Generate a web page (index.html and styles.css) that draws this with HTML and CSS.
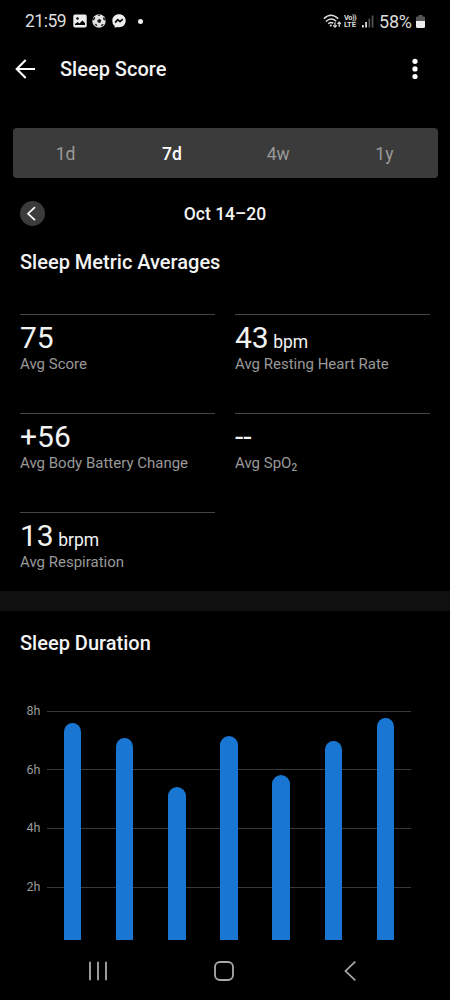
FILE: index.html
```html
<!DOCTYPE html>
<html lang="en">
<head>
<meta charset="utf-8">
<meta name="viewport" content="width=device-width, initial-scale=1">
<title>Sleep Score</title>
<link rel="stylesheet" href="styles.css">
</head>
<body>
<div class="status">
  <div class="status-left">
    <span class="clock">21:59</span>
    <svg width="14" height="14" viewBox="0 0 14 14"><path fill="#eee" fill-rule="evenodd" d="M2 .5h10a1.7 1.7 0 0 1 1.7 1.7v9.6a1.7 1.7 0 0 1-1.7 1.7H2a1.7 1.7 0 0 1-1.7-1.7V2.200A1.700 1.700 0 0 1 2 .5zM2 11h10V9L9.300 6.500 6.500 9.500 4.700 8 2 10zM4.500 3.200a1.300 1.300 0 1 0 0 2.600 1.300 1.300 0 0 0 0-2.600z"/></svg>
    <svg width="14" height="14" viewBox="0 0 14 14"><circle cx="7" cy="7" r="6.700" fill="#e4e4e4"/><path fill="#222" d="M7.300 4.800l2 1.500-.7 2.500H6l-.9-2.300zM5.200.8l3.600-.1L7 2.300zM1 4.600l1.900-1.900.3 2.300L.8 6.800zM13.200 5l-1.900-1.900-.3 2.200 2.400 1.700zM2.300 9.800l2.300.2.9 2.300-1.800-.7zM11.900 10l-2.300.2-.9 2.200 1.800-.6z"/></svg>
    <svg width="14" height="14" viewBox="0 0 14 14"><path fill="#eee" d="M7 .3c3.800 0 6.700 2.700 6.700 6.400S10.800 13.200 7 13.200c-.7 0-1.300-.1-2-.3l-2.200.9-.2-1.900A6.200 6.200 0 0 1 .3 6.700C.3 3 3.200.3 7 .3z"/><path d="M3.200 8.600l2.500-3 2.400 2 2.700-2.400" fill="none" stroke="#111" stroke-width="1.700" stroke-linejoin="round"/></svg>
    <i class="dot"></i>
  </div>
  <div class="status-right">
    <svg width="19" height="15" viewBox="0 0 19 15" fill="none" stroke="#ddd" stroke-width="1.500"><path d="M.8 4.800Q8 -2.200 15.200 4.800M3 7.500q5-4.800 10.200-.2M5.300 9.800q2.500-2.300 5-.4"/><circle cx="7.800" cy="11.500" r="1.100" fill="#ddd" stroke="none"/><path stroke-width="1.200" d="M12 8.200v4.800M10.200 11.400l1.800 1.800 1.800-1.800M16.200 13V8.300M14.500 10l1.700-1.800L17.900 10"/></svg>
    <span class="volte"><span class="vo">Vo))</span><span>LTE</span></span>
    <svg class="signal" width="12" height="13" viewBox="0 0 12 13"><path fill="#ddd" d="M0 10h1.800v2.500H0zM3.200 7H5v5.500H3.200z"/><path fill="#555" d="M6.500 3.500h1.700v9H6.500zM9.700.5h1.700v12H9.700z"/></svg>
    <span class="pct">58%</span>
    <svg class="battery" width="9" height="13" viewBox="0 0 9 13"><path fill="#555" d="M2.500 0h4v1.500H8q1 0 1 1V7H0V2.500q0-1 1-1h1.500z"/><path fill="#eee" d="M0 6h9v5.500Q9 13 7.500 13h-6Q0 13 0 11.500z"/></svg>
  </div>
</div>
<header class="appbar">
  <svg width="20" height="20" viewBox="0 0 20 20" fill="none" stroke="#fff" stroke-width="2.100"><path d="M20 10H2M10.700 1L1.700 10l9 9"/></svg>
  <h1>Sleep Score</h1>
  <svg width="6" height="22" viewBox="0 0 6 22" fill="#fff"><circle cx="3" cy="3.300" r="2.600"/><circle cx="3" cy="10.900" r="2.600"/><circle cx="3" cy="18.500" r="2.600"/></svg>
</header>
<nav class="tabs"><span>1d</span><span class="active">7d</span><span>4w</span><span>1y</span></nav>
<div class="range">
  <span class="prev"><svg width="25" height="25" viewBox="0 0 25 25" fill="none" stroke="#fff" stroke-width="1.700"><path d="M15 6.200L8 12.700l7 6.500"/></svg></span>
  <span class="dates">Oct 14–20</span>
</div>
<h2 class="avg-title">Sleep Metric Averages</h2>
<section class="metrics">
  <div class="metric"><p class="value">75</p><p class="label">Avg Score</p></div>
  <div class="metric"><p class="value">43 <small>bpm</small></p><p class="label">Avg Resting Heart Rate</p></div>
  <div class="metric"><p class="value">+56</p><p class="label">Avg Body Battery Change</p></div>
  <div class="metric"><p class="value">--</p><p class="label">Avg SpO<span class="sub">2</span></p></div>
  <div class="metric"><p class="value">13 <small>brpm</small></p><p class="label">Avg Respiration</p></div>
</section>
<div class="band"></div>
<h2 class="dur-title">Sleep Duration</h2>
<section class="chart">
  <div class="axis"><span>8h</span><span>6h</span><span>4h</span><span>2h</span></div>
  <div class="plot">
    <div class="lines"><i></i><i></i><i></i><i></i></div>
    <div class="bars">
      <i style="height:216.8px"></i><i style="height:201.800px"></i><i style="height:153.300px"></i><i style="height:204px"></i><i style="height:164.700px"></i><i style="height:198.700px"></i><i style="height:222px"></i>
    </div>
  </div>
</section>
<footer class="navbar">
  <svg width="20" height="20" viewBox="0 0 20 20" stroke="#aaa" stroke-width="1.800"><path d="M2 .8v18.400M10 .8v18.400M18 .8v18.400"/></svg>
  <svg width="20" height="20" viewBox="0 0 20 20" fill="none" stroke="#aaa" stroke-width="1.800"><rect x="1" y="1" width="18" height="18" rx="5"/></svg>
  <svg width="20" height="20" viewBox="0 0 20 20" fill="none" stroke="#aaa" stroke-width="1.700"><path d="M15.300.6L5.500 10l9.800 9.400"/></svg>
</footer>
</body>
</html>
```
FILE: styles.css
```css
* { box-sizing: border-box; margin: 0; padding: 0; }
body {
  width: 450px;
  height: 1000px;
  overflow: hidden;
  display: flex;
  flex-direction: column;
  background: #000;
  color: #f3f3f3;
  font-family: Roboto, "Liberation Sans", sans-serif;
}
svg { display: block; flex: none; }
.status {
  height: 42px;
  padding: 0 25px;
  display: flex;
  justify-content: space-between;
  align-items: center;
  color: #ddd;
}
.status-left, .status-right { display: flex; align-items: center; }
.status-left { gap: 5.700px; }
.clock { width: 42px; font-size: 17.500px; letter-spacing: -0.500px; }
.dot { width: 5px; height: 5px; margin-left: 6px; border-radius: 50%; background: #eee; }
.volte {
  width: 14px;
  margin: 0 4px 0 2px;
  display: flex;
  flex-direction: column;
  font-size: 7.500px;
  line-height: 7px;
  font-weight: 700;
  letter-spacing: -0.100px;
}
.vo { letter-spacing: -0.500px; }
.signal { margin-right: 5px; }
.pct { width: 36px; font-size: 18px; letter-spacing: -0.200px; }
.battery { margin-left: 1px; }
.appbar { height: 54px; padding: 0 32px 0 15px; display: flex; align-items: center; }
h1 { flex: 1; margin-left: 25px; font-size: 20px; font-weight: 500; line-height: 24px; }
.tabs {
  height: 50px;
  margin: 32px 12.500px 0;
  padding-top: 1px;
  display: grid;
  grid-template-columns: repeat(4, 1fr);
  align-items: center;
  text-align: center;
  border-radius: 4px;
  background: #3b3b3b;
  color: #999;
  font-size: 17.500px;
}
.active { color: #fff; font-weight: 500; }
.range {
  height: 25px;
  margin: 23px 0 1px;
  padding: 0 20px;
  display: grid;
  grid-template-columns: 25px 1fr 25px;
  align-items: center;
}
.prev { width: 25px; height: 25px; border-radius: 50%; background: #3b3b3b; }
.dates { text-align: center; font-size: 17.500px; font-weight: 500; }
h2 { padding-left: 20px; font-size: 20px; font-weight: 500; line-height: 24px; }
.avg-title { margin-top: 23px; }
.metrics {
  height: 317px;
  padding: 40px 20px 0;
  display: grid;
  grid-template-columns: 195px 195px;
  grid-template-rows: repeat(3, 99.200px);
  column-gap: 20px;
}
.metric { border-top: 1px solid #454545; padding-top: 5px; }
.value { height: 35px; font-size: 30px; line-height: 36px; white-space: nowrap; }
.value small { font-size: 17.500px; line-height: 1; margin-left: -3px; }
.label { font-size: 15px; line-height: 18px; color: #999; }
.sub { font-size: 10px; font-weight: 500; line-height: 1; position: relative; top: 3px; }
.band { height: 20px; background: #101010; }
.dur-title { margin-top: 20px; }
.chart { height: 285px; padding: 47px 39px 0 0; display: flex; }
.axis { width: 46.500px; padding: 1px 6px 0 0; text-align: right; color: #999; font-size: 12.500px; }
.axis span { display: block; height: 58.700px; line-height: 16px; }
.plot { flex: 1; display: grid; }
.lines, .bars { grid-area: 1 / 1; }
.lines { padding-top: 8.500px; }
.lines i { display: block; height: 58.700px; border-top: 1px solid #393939; }
.bars {
  height: 238px;
  padding: 0 17px 0 17.500px;
  display: flex;
  justify-content: space-between;
  align-items: flex-end;
}
.bars i { width: 17.300px; border-radius: 9px 9px 0 0; background: #1976d2; }
.navbar { padding: 21px 90px 0 88px; display: flex; justify-content: space-between; }
```
